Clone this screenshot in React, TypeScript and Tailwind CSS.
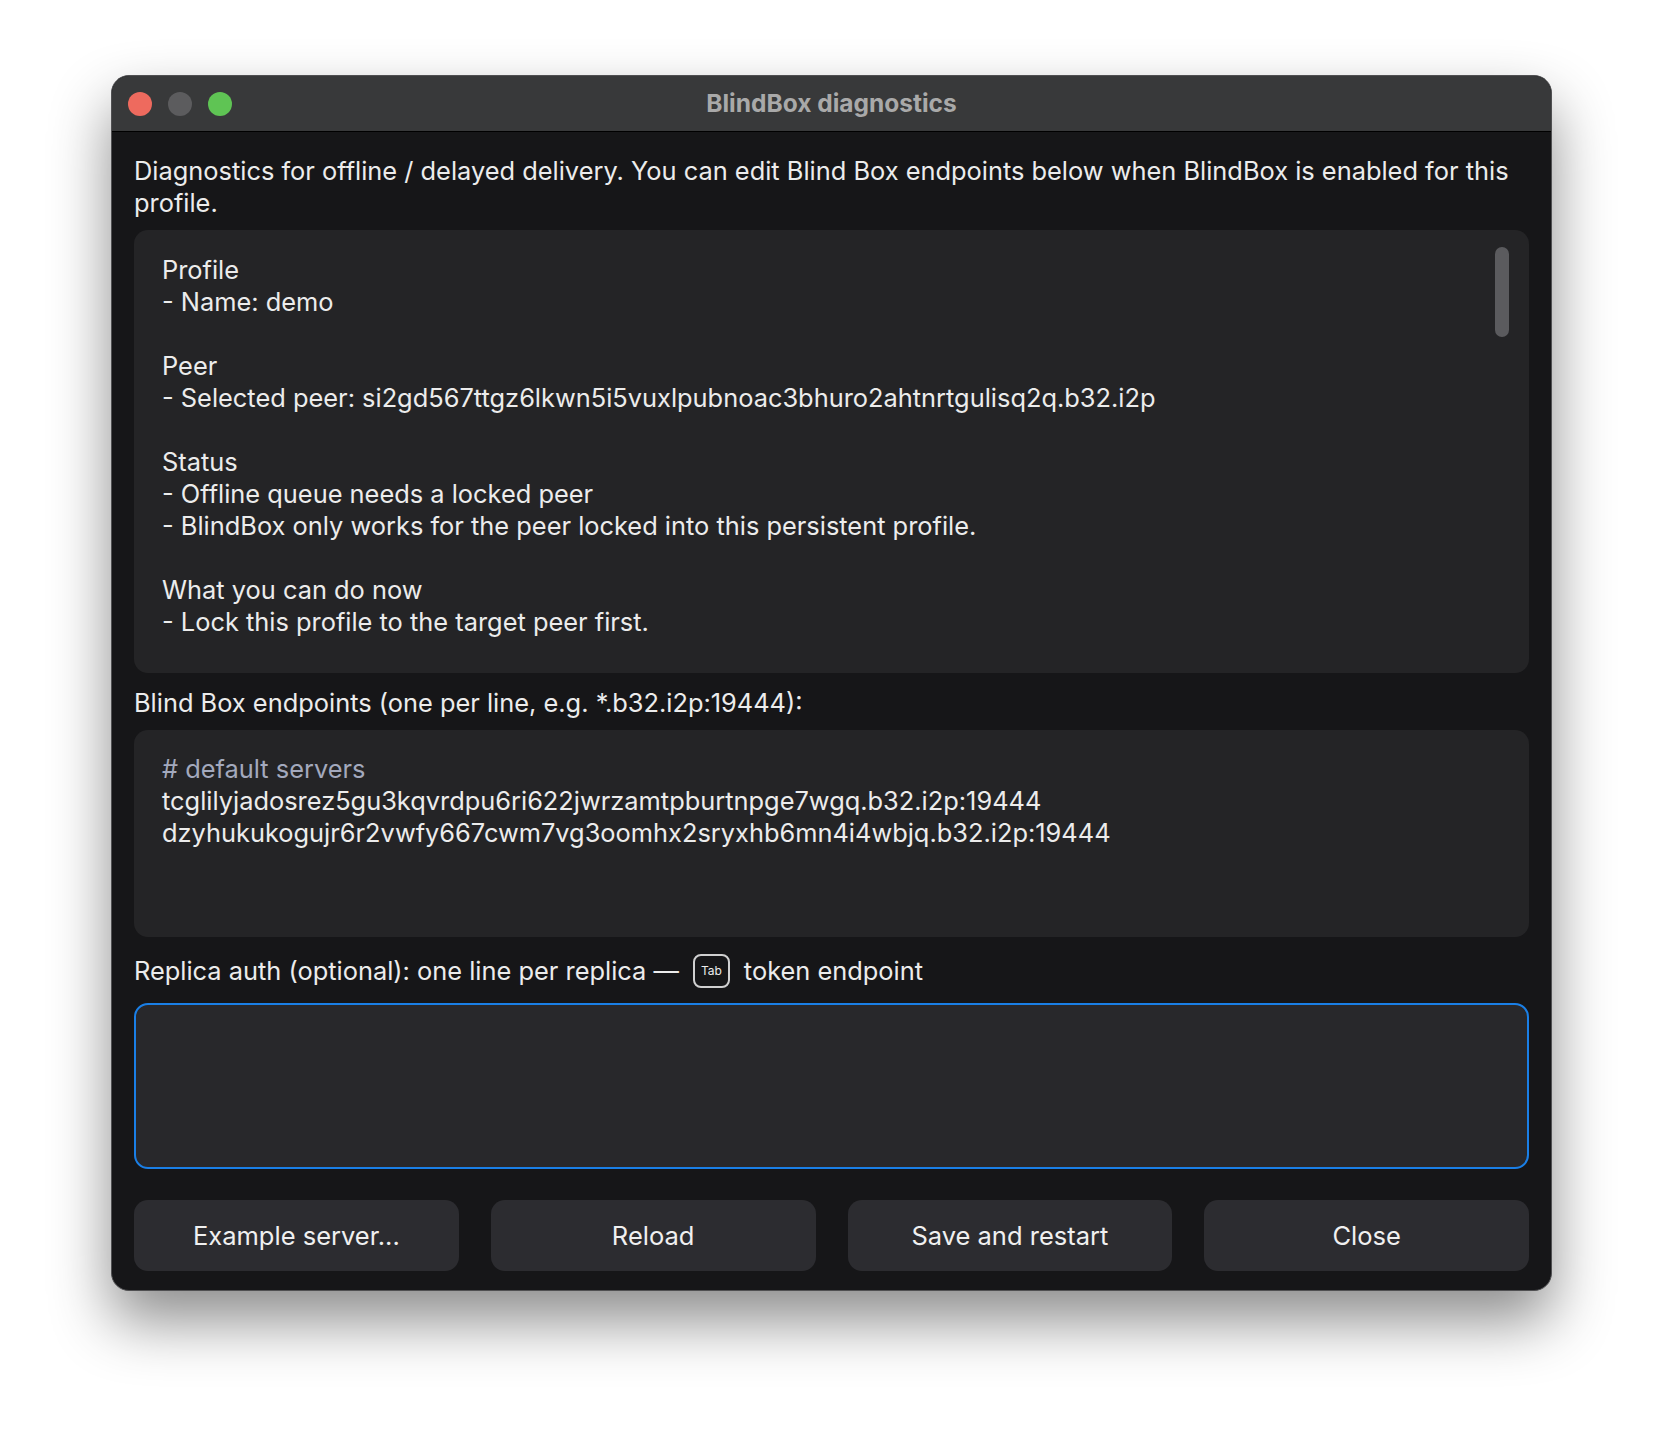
export default function App() {
  const font = { fontFamily: 'Inter, "Noto Sans", sans-serif' };
  return (
    <div className="w-[1664px] h-[1440px] bg-white relative" style={font}>
      <div className="absolute left-[111px] top-[75px] w-[1441px] h-[1216px] rounded-[18px] bg-[#161618] overflow-hidden border border-[#505052] shadow-[0_30px_60px_rgba(0,0,0,0.45)] flex flex-col">
        <div className="h-[56px] shrink-0 bg-[#38393a] border-b border-black flex items-center relative">
          <div className="flex gap-[16px] pl-[16px]">
            <div className="w-[24px] h-[24px] rounded-full bg-[#ee6a5e]" />
            <div className="w-[24px] h-[24px] rounded-full bg-[#5c5c5e]" />
            <div className="w-[24px] h-[24px] rounded-full bg-[#5fc454]" />
          </div>
          <div className="absolute inset-0 flex items-center justify-center text-[#a9a9a9] font-bold text-[24.5px]">BlindBox diagnostics</div>
        </div>
        <div className="flex-1 flex flex-col px-[22px] pt-[23px] pb-[22px] text-[#ececec] text-[25.4px] leading-[32px]">
          <div>Diagnostics for offline / delayed delivery. You can edit Blind Box endpoints below when BlindBox is enabled for this profile.</div>
          <div className="mt-[11px] h-[443px] rounded-[14px] bg-[#242426] relative pl-[28px] pt-[24px]">
            <div>Profile</div>
            <div>- Name: demo</div>
            <div>&nbsp;</div>
            <div>Peer</div>
            <div>- Selected peer: si2gd567ttgz6lkwn5i5vuxlpubnoac3bhuro2ahtnrtgulisq2q.b32.i2p</div>
            <div>&nbsp;</div>
            <div>Status</div>
            <div>- Offline queue needs a locked peer</div>
            <div>- BlindBox only works for the peer locked into this persistent profile.</div>
            <div>&nbsp;</div>
            <div>What you can do now</div>
            <div>- Lock this profile to the target peer first.</div>
            <div className="absolute right-[20px] top-[17px] w-[14px] h-[90px] rounded-full bg-[#5b5b5e]" />
          </div>
          <div className="mt-[14px]">Blind Box endpoints (one per line, e.g. *.b32.i2p:19444):</div>
          <div className="mt-[11px] h-[207px] rounded-[14px] bg-[#242426] pl-[28px] pt-[23px]">
            <div className="text-[#a3a9bd]"># default servers</div>
            <div>tcglilyjadosrez5gu3kqvrdpu6ri622jwrzamtpburtnpge7wgq.b32.i2p:19444</div>
            <div>dzyhukukogujr6r2vwfy667cwm7vg3oomhx2sryxhb6mn4i4wbjq.b32.i2p:19444</div>
          </div>
          <div className="mt-[18px] flex items-center h-[32px]">
            <span>Replica auth (optional): one line per replica —</span>
            <span className="mx-[14px] w-[37px] h-[34px] rounded-[8px] border-2 border-[#d0d0d0] text-[12px] leading-none flex items-center justify-center">Tab</span>
            <span>token endpoint</span>
          </div>
          <div className="mt-[16px] h-[166px] rounded-[14px] bg-[#28282b] border-2 border-[#1a7fe6]" />
          <div className="mt-[31px] grid grid-cols-4 gap-[32px]">
            {["Example server...", "Reload", "Save and restart", "Close"].map((t) => (
              <div key={t} className="h-[71px] rounded-[14px] bg-[#2c2c30] flex items-center justify-center text-[#f0f0f0] text-[25.5px]">{t}</div>
            ))}
          </div>
        </div>
      </div>
    </div>
  );
}
